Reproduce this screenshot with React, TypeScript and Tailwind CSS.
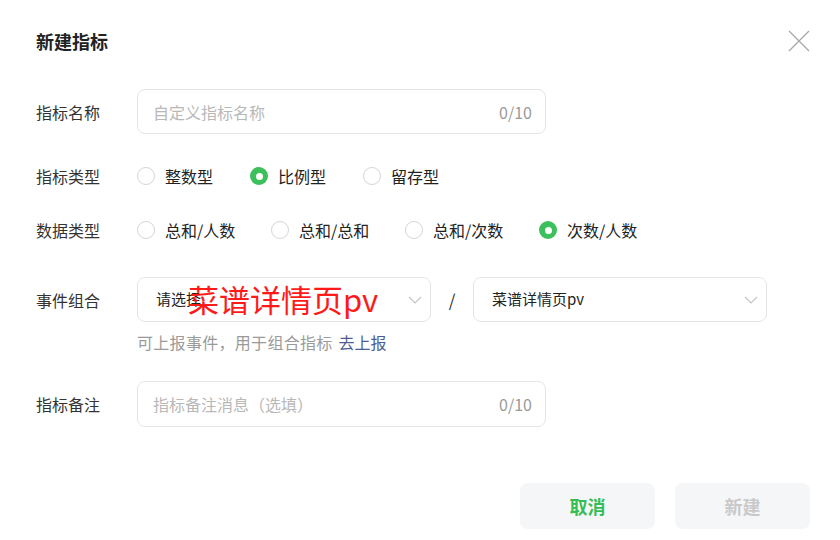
import React from "react";

const font = { fontFamily: '"Noto Sans CJK SC", "Noto Sans", sans-serif' };

function Radio({ label, checked, w }: { label: string; checked?: boolean; w: string }) {
  return (
    <div className={`flex items-center gap-[10px] ${w}`}>
      {checked ? (
        <span className="flex h-[18px] w-[18px] items-center justify-center rounded-full bg-[#3cc05c]">
          <span className="h-[7px] w-[7px] rounded-full bg-white" />
        </span>
      ) : (
        <span className="h-[18px] w-[18px] rounded-full border border-[#d3d5da] bg-white" />
      )}
      <span className="text-[16px] leading-[24px] text-[#222]">{label}</span>
    </div>
  );
}

function Chevron() {
  return (
    <svg width="14" height="8" viewBox="0 0 14 8" fill="none">
      <path d="M1 1l6 6 6-6" stroke="#c4c4c4" strokeWidth="1.2" />
    </svg>
  );
}

export default function App() {
  return (
    <div className="relative h-[540px] w-[840px] bg-white" style={font}>
      <div className="flex items-center justify-between pl-[36px] pr-[30px] pt-[29px]">
        <div className="text-[18px] font-bold leading-[24px] text-[#222]">新建指标</div>
        <svg width="22" height="22" viewBox="0 0 22 22" fill="none">
          <path d="M1 1l20 20M21 1L1 21" stroke="#a8a8a8" strokeWidth="1.3" />
        </svg>
      </div>

      <div className="flex flex-col pl-[36px]">
        <div className="mt-[36px] flex items-center">
          <div className="w-[101px] text-[16px] text-[#333]">指标名称</div>
          <div className="flex h-[45px] w-[409px] items-center justify-between rounded-[8px] border border-[#e3e5e8] pl-[15px] pr-[13px]">
            <span className="text-[16px] text-[#b8b8b8]">自定义指标名称</span>
            <span className="text-[16px] text-[#9a9a9a]">0/10</span>
          </div>
        </div>

        <div className="mt-[30px] flex h-[24px] items-center">
          <div className="w-[101px] text-[16px] text-[#333]">指标类型</div>
          <div className="flex items-center">
            <Radio label="整数型" w="w-[113px]" />
            <Radio label="比例型" checked w="w-[113px]" />
            <Radio label="留存型" w="w-[113px]" />
          </div>
        </div>

        <div className="mt-[30px] flex h-[24px] items-center">
          <div className="w-[101px] text-[16px] text-[#333]">数据类型</div>
          <div className="flex items-center">
            <Radio label="总和/人数" w="w-[134px]" />
            <Radio label="总和/总和" w="w-[134px]" />
            <Radio label="总和/次数" w="w-[134px]" />
            <Radio label="次数/人数" checked w="w-[134px]" />
          </div>
        </div>

        <div className="mt-[35px] flex items-center">
          <div className="w-[101px] text-[16px] text-[#333]">事件组合</div>
          <div className="flex items-center">
            <div className="relative flex h-[45px] w-[294px] items-center justify-between rounded-[8px] border border-[#e3e5e8] pl-[18px] pr-[8px]">
              <span className="text-[15px] text-[#222]">请选择</span>
              <Chevron />
              <span className="absolute left-[50px] top-[3px] text-[31px] leading-[36px] text-[#ff1a1a]">
                菜谱详情页pv
              </span>
            </div>
            <div className="w-[42px] text-center text-[17px] text-[#333]">/</div>
            <div className="flex h-[45px] w-[294px] items-center justify-between rounded-[8px] border border-[#e3e5e8] pl-[18px] pr-[8px]">
              <span className="text-[15px] text-[#222]">菜谱详情页pv</span>
              <Chevron />
            </div>
          </div>
        </div>

        <div className="ml-[101px] mt-[10px] flex gap-[6px] text-[16px] leading-[20px] text-[#9a9a9a]">
          <span className="tracking-[0.3px]">可上报事件，用于组合指标</span>
          <span className="text-[#4e5d8f]">去上报</span>
        </div>

        <div className="mt-[29px] flex items-center">
          <div className="w-[101px] text-[16px] text-[#333]">指标备注</div>
          <div className="flex h-[46px] w-[409px] items-center justify-between rounded-[8px] border border-[#e3e5e8] pl-[15px] pr-[13px]">
            <span className="text-[16px] text-[#b8b8b8]">指标备注消息（选填）</span>
            <span className="text-[16px] text-[#9a9a9a]">0/10</span>
          </div>
        </div>
      </div>

      <div className="mt-[56px] flex justify-end gap-[20px] pr-[30px]">
        <div className="flex h-[46px] w-[135px] items-center justify-center rounded-[8px] bg-[#f5f6f8] text-[18px] font-bold text-[#35bd55]">
          取消
        </div>
        <div className="flex h-[46px] w-[135px] items-center justify-center rounded-[8px] bg-[#f5f6f8] text-[18px] font-bold text-[#c9c9c9]">
          新建
        </div>
      </div>
    </div>
  );
}
